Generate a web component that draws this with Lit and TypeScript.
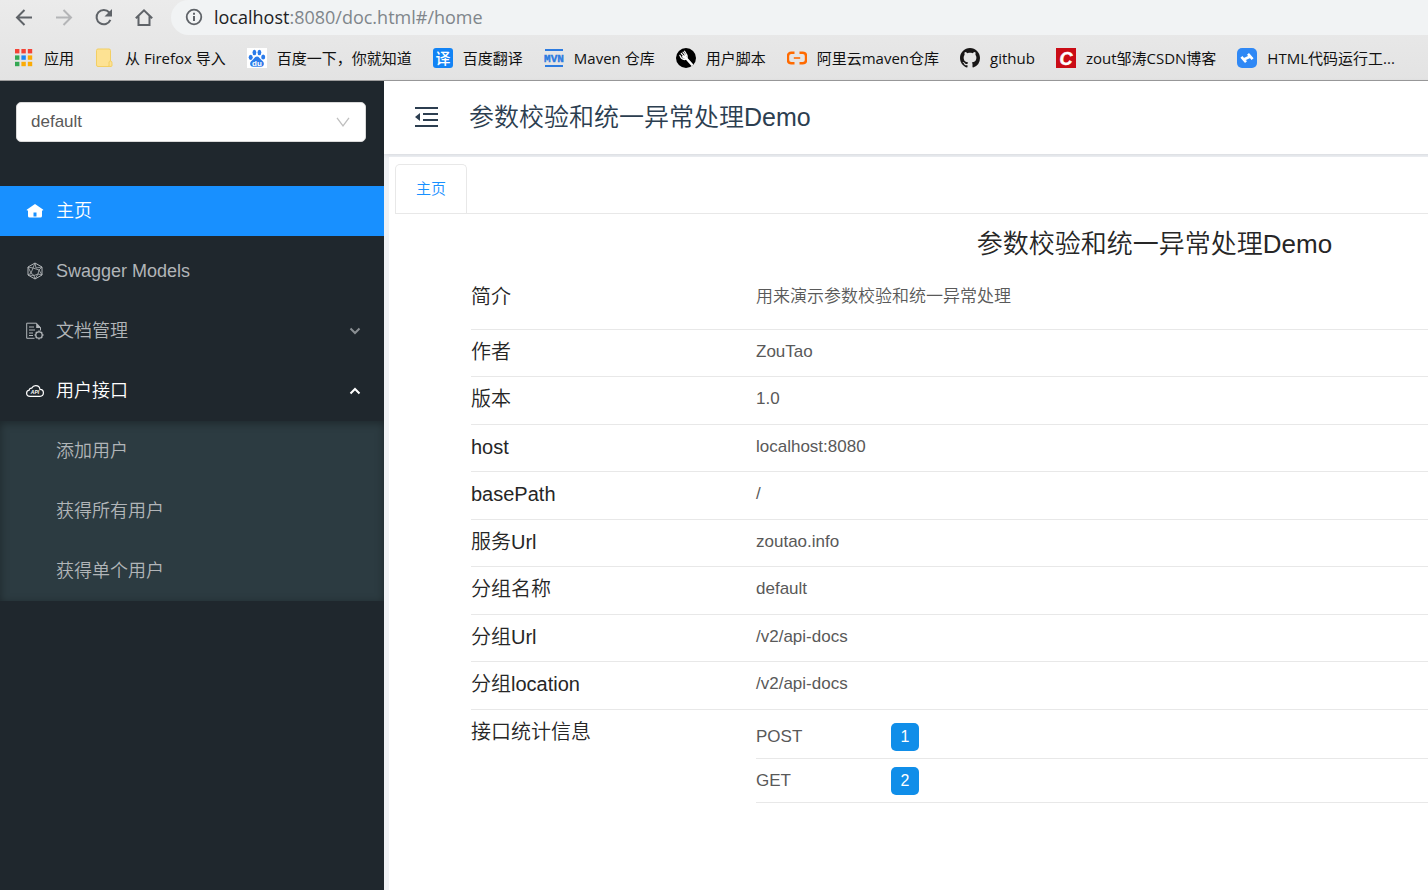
import { LitElement, html, css, svg, TemplateResult } from "lit";
import { customElement, state } from "lit/decorators.js";

const icon = (w: number, h: number, body: TemplateResult) =>
  html`<svg width=${w} height=${h} viewBox="0 0 ${w} ${h}" fill="none" aria-hidden="true">${body}</svg>`;

const backIcon = icon(20, 20, svg`<path d="M18 9.500H3M10.500 2L3 9.500l7.500 7.500" stroke="#5f6368" stroke-width="2"/>`);
const forwardIcon = icon(20, 20, svg`<path d="M2 9.500h15M9.500 2L17 9.500 9.500 17" stroke="#b4b5b7" stroke-width="2"/>`);
const reloadIcon = icon(20, 20, svg`<path d="M16.400 11.900A7.200 7.200 0 1 1 15.300 4.500" stroke="#5f6368" stroke-width="2"/><path d="M18 1v7.500h-7.500z" fill="#5f6368"/>`);
const browserHomeIcon = icon(20, 20, svg`<path d="M1.800 10.300L10 2.300l8.200 8M4.500 8.300V17h11V8.300" stroke="#5f6368" stroke-width="2"/>`);
const infoIcon = icon(18, 18, svg`<circle cx="9" cy="9" r="7.300" stroke="#5f6368" stroke-width="1.800"/><path d="M9 8v5M9 4.800v2" stroke="#5f6368" stroke-width="2"/>`);

const appColors = ["#f44336", "#f44336", "#f44336", "#34a853", "#1e88f5", "#fbab05", "#34a853", "#fbab05", "#fbab05"];
const appsIcon = icon(20, 20, svg`${appColors.map(
  (c, i) => svg`<rect x=${1 + (i % 3) * 6.4} y=${1 + Math.floor(i / 3) * 6.4} width="4.400" height="4.400" fill=${c}/>`
)}`);
const folderIcon = icon(20, 20, svg`<path d="M1.500 2.500a1.500 1.500 0 0 1 1.500-1.500h11a1.500 1.500 0 0 1 1.500 1.500V13h.500v5.500H3A1.500 1.500 0 0 1 1.500 17z" fill="#fde293" stroke="#f3cf63"/><path d="M13 18.500c1.500 0 1-2 1-3.500s.500-2 1.500-2 1.500 1 1.500 2.500v2c0 1-1 1-4 1z" fill="#fde293" stroke="#f3cf63"/>`);
const baiduIcon = icon(20, 20, svg`<path fill="#fff" d="M0 0h20v20H0z"/><g fill="#2b7bea"><ellipse cx="3.700" cy="9.300" rx="2" ry="2.600"/><ellipse cx="7.400" cy="4.500" rx="1.900" ry="2.700"/><ellipse cx="12.400" cy="4.500" rx="1.900" ry="2.700"/><ellipse cx="16.200" cy="9" rx="2" ry="2.500"/><path d="M10 8.500c2 0 2.800 2 4.200 3.300 1.600 1.400 3 2.600 2.600 4.600-.500 2.400-2.800 2.600-6.800 2.400-4 .200-6.300 0-6.800-2.400-.400-2 1-3.200 2.600-4.600C7.200 10.500 8 8.500 10 8.500z"/></g><text x="10" y="17.500" text-anchor="middle" font-family="Liberation Sans" font-weight="700" font-size="8" fill="#fff">du</text>`);
const translateIcon = icon(20, 20, svg`<rect width="20" height="20" rx="3" fill="#1283f5"/><text x="10" y="15.500" text-anchor="middle" font-family="Noto Sans CJK SC" font-weight="500" font-size="15" fill="#fff">译</text>`);
const mvnIcon = icon(20, 20, svg`<path fill="#2c7be0" d="M1 1h18v2H1zM1 17h18v2H1z"/><text x="10" y="14" text-anchor="middle" font-family="Liberation Mono" font-weight="700" font-size="11" stroke="#2c7be0" stroke-width=".400" fill="#2c7be0">MVN</text>`);
const scriptIcon = icon(20, 20, svg`<circle cx="10" cy="10" r="10" fill="#000"/><path d="M9.500 9.500l6.300 7" stroke="#fff" stroke-width="2.600" stroke-linecap="round"/><path d="M3.800 7.300c1 2.500 2.800 4.500 5.200 4.200 2-.500 2.600-2 2-4.200L8.600 3.200M5.300 5.300l3.400 4M7 4.200l3 3.700" stroke="#fff" stroke-width="1.200" stroke-linecap="round"/><path d="M5.500 8.500l4.500-1.800.800 3.500-3 .800z" fill="#fff"/>`);
const aliyunIcon = icon(20, 20, svg`<path d="M7.500 4.800H4.300C2.300 4.800 1 6 1 8v4c0 2 1.300 3.200 3.300 3.200h3.200M12.500 4.800h3.200C17.700 4.800 19 6 19 8v4c0 2-1.300 3.200-3.300 3.200h-3.200" stroke="#ff6a00" stroke-width="2.400"/><path d="M6.800 9.200h6.400v1.600H6.800z" fill="#ff6a00"/>`);
const githubIcon = html`<svg width="20" height="20" viewBox="0 0 16 16" aria-hidden="true"><path fill="#191717" d="M8 0C3.580 0 0 3.580 0 8c0 3.540 2.290 6.530 5.470 7.590.400.070.550-.170.550-.380 0-.190-.010-.820-.010-1.490-2.010.370-2.530-.490-2.690-.940-.090-.230-.480-.940-.820-1.130-.280-.150-.680-.520-.010-.530.630-.010 1.080.580 1.230.820.720 1.210 1.870.870 2.330.660.070-.520.280-.870.510-1.070-1.780-.200-3.640-.890-3.640-3.950 0-.870.310-1.590.820-2.150-.080-.200-.360-1.020.080-2.120 0 0 .670-.210 2.200.820.640-.180 1.320-.270 2-.270s1.360.090 2 .270c1.530-1.040 2.200-.820 2.200-.820.440 1.100.160 1.920.080 2.120.510.560.820 1.270.820 2.150 0 3.070-1.870 3.750-3.650 3.950.290.250.540.730.540 1.480 0 1.070-.010 1.930-.010 2.200 0 .210.150.460.550.380A8.010 8.010 0 0 0 16 8c0-4.420-3.580-8-8-8z"/></svg>`;
const csdnIcon = icon(20, 20, svg`<path fill="#ca0c16" d="M0 0h20v20H0z"/><text x="10" y="16.500" text-anchor="middle" font-family="Liberation Sans" font-style="italic" font-weight="700" font-size="18" stroke="#fff" stroke-width=".500" fill="#fff">C</text>`);
const htmlIcon = icon(20, 20, svg`<rect width="20" height="20" rx="5" fill="#2f88f5"/><path d="M4.400 8.800l4.600 5.400M11 5.800l4.600 5.400M6.800 11.500l6.400-3" stroke="#fff" stroke-width="2.600"/>`);

const homeIcon = icon(18, 18, svg`<path d="M9 2l8 5.600c.500.400.200 1-.300 1H16V14a1.600 1.600 0 0 1-1.600 1.600H3.600A1.600 1.600 0 0 1 2 14V8.600h-.700c-.500 0-.800-.600-.300-1z" fill="currentColor"/><path d="M7.500 10.500h3v4h-3z" fill="#1890ff"/>`);
const modelsIcon = icon(18, 18, svg`<g stroke="currentColor"><path d="M9 1l7 4v8l-7 4-7-4V5z"/><path d="M9 1L7 6 2 5l3 6-3 2 6 .500 1 3.500 3-5 4 1-3-5 3-3-6 1zM7 6l6 2-1 4-4 1.500L5 11z" stroke-width=".800"/></g>`);
const docIcon = icon(18, 18, svg`<g stroke="currentColor"><path d="M8.500 16.300H.700V1.200h9.800l4 4.300v3"/><path d="M3 5h5M3 8h6M3 11h4M3 13.500h4"/><circle cx="13" cy="13" r="3.200" stroke-width="1.300"/><path d="M13 8.600v1.200M13 16.200v1.300M8.600 13h1.200M16.200 13h1.300M9.900 9.900l.800.800M15.300 15.300l.800.800M16.100 9.900l-.800.800M10.700 15.300l-.800.800" stroke-width="1.400"/></g><path d="M10.200 1v5h4.800z" fill="currentColor"/>`);
const apiIcon = icon(18, 18, svg`<path d="M4.200 14.300C2 14.300.600 13 .600 11.200c0-1.600 1-2.700 2.600-3 .200-1.500 1.300-2.300 2.600-2.100C6.600 4.400 8 3.600 9.700 3.600c2.300 0 4 1.500 4.300 3.800 2 .100 3.400 1.600 3.400 3.400 0 2-1.400 3.500-3.400 3.500z" stroke="currentColor" stroke-width="1.200"/><text x="9" y="12" text-anchor="middle" font-family="Liberation Sans" font-style="italic" font-weight="700" font-size="5" fill="currentColor">API</text>`);
const chevronIcon = html`<svg class="chevron" width="12" height="8" viewBox="0 0 12 8" fill="none" aria-hidden="true"><path d="M1.500 1.500L6 6l4.500-4.500" stroke="currentColor" stroke-width="2"/></svg>`;
const selectArrow = icon(14, 10, svg`<path d="M1 .800l6 8 6-8" stroke="#bfbfbf" stroke-width="1.300"/>`);
const foldIcon = icon(24, 22, svg`<path d="M0 1h23v2H0zM8 7h15v2H8zM8 13h15v2H8zM0 19h23v2H0zM5 7v8L0 11z" fill="#2c3e50"/>`);

const bookmarks: [TemplateResult, string][] = [
  [appsIcon, "应用"],
  [folderIcon, "从 Firefox 导入"],
  [baiduIcon, "百度一下，你就知道"],
  [translateIcon, "百度翻译"],
  [mvnIcon, "Maven 仓库"],
  [scriptIcon, "用户脚本"],
  [aliyunIcon, "阿里云maven仓库"],
  [githubIcon, "github"],
  [csdnIcon, "zout邹涛CSDN博客"],
  [htmlIcon, "HTML代码运行工..."],
];

const info: [string, string][] = [
  ["简介", "用来演示参数校验和统一异常处理"],
  ["作者", "ZouTao"],
  ["版本", "1.0"],
  ["host", "localhost:8080"],
  ["basePath", "/"],
  ["服务Url", "zoutao.info"],
  ["分组名称", "default"],
  ["分组Url", "/v2/api-docs"],
  ["分组location", "/v2/api-docs"],
];

const title = "参数校验和统一异常处理Demo";

@customElement("browser-bar")
class BrowserBar extends LitElement {
  static styles = css`
    :host {
      display: block;
      overflow: hidden;
      background: linear-gradient(#ebebeb, #e3e3e3);
      border-bottom: 1px solid #9c9c9c;
      font: 15px/20px "Open Sans", "Noto Sans CJK SC", sans-serif;
      color: #111;
    }
    svg { display: block; flex: none; }
    .nav { display: flex; align-items: center; height: 35px; padding-left: 14px; gap: 20px; }
    button { display: block; border: 0; padding: 0; background: none; }
    .address {
      flex: 1;
      box-sizing: border-box;
      display: flex;
      align-items: center;
      gap: 11px;
      height: 35px;
      margin-left: -3px;
      padding: 0 0 1px 14px;
      border-radius: 18px 0 0 18px;
      background: #f1f3f4;
      font-size: 18px;
      line-height: 24px;
      color: #80868b;
    }
    .host { color: #202124; }
    .marks { display: flex; align-items: center; height: 45px; padding-left: 14px; gap: 21px; white-space: nowrap; }
    a { display: flex; align-items: center; gap: 10px; color: inherit; text-decoration: none; }
  `;
  render() {
    return html`
      <div class="nav">
        <button aria-label="后退">${backIcon}</button>
        <button aria-label="前进">${forwardIcon}</button>
        <button aria-label="刷新">${reloadIcon}</button>
        <button aria-label="主页">${browserHomeIcon}</button>
        <div class="address">${infoIcon}<span><span class="host">localhost</span>:8080/doc.html#/home</span></div>
      </div>
      <nav class="marks">${bookmarks.map(([i, t]) => html`<a href="#">${i}<span>${t}</span></a>`)}</nav>
    `;
  }
}

@customElement("side-menu")
class SideMenu extends LitElement {
  @state() private open = true;
  static styles = css`
    :host {
      display: block;
      flex: none;
      box-sizing: border-box;
      width: 384px;
      padding-top: 21px;
      background: #1f272d;
      color: #b1b5b8;
      font-size: 18px;
      line-height: 26px;
    }
    svg { display: block; flex: none; }
    .picker { display: grid; align-items: center; margin: 0 18px 44px 16px; }
    .picker > * { grid-area: 1 / 1; }
    .picker svg { justify-self: end; margin-right: 16px; pointer-events: none; }
    select {
      appearance: none;
      width: 100%;
      height: 40px;
      padding: 0 40px 0 14px;
      border: 1px solid #d9d9d9;
      border-radius: 5px;
      background: #fff;
      color: #595959;
      font: inherit;
      font-size: 17px;
    }
    ul { list-style: none; margin: 0; padding: 0; display: flex; flex-direction: column; gap: 10px; }
    a, button {
      box-sizing: border-box;
      display: flex;
      align-items: center;
      gap: 12px;
      width: 100%;
      height: 50px;
      padding: 0 23px 0 26px;
      border: 0;
      background: none;
      color: inherit;
      font: inherit;
      text-decoration: none;
      text-align: left;
    }
    .active { background: #1890ff; color: #fff; }
    .chevron { margin-left: auto; color: #8a8f93; }
    .open, .open .chevron { color: #fff; }
    .open .chevron { transform: rotate(180deg); }
    .sub { margin-top: 5px; padding: 5px 0; background: #2c3b41; box-shadow: inset 0 2px 8px rgba(0, 0, 0, 0.35); }
    .sub a { padding-left: 56px; }
  `;
  render() {
    return html`
      <div class="picker">
        <select aria-label="分组"><option>default</option></select>
        ${selectArrow}
      </div>
      <ul>
        <li><a class="active" href="#">${homeIcon}主页</a></li>
        <li><a href="#">${modelsIcon}Swagger Models</a></li>
        <li><button>${docIcon}文档管理${chevronIcon}</button></li>
        <li>
          <button class=${this.open ? "open" : ""} aria-expanded=${this.open} @click=${() => (this.open = !this.open)}>
            ${apiIcon}用户接口${chevronIcon}
          </button>
          ${this.open
            ? html`<ul class="sub">
                ${["添加用户", "获得所有用户", "获得单个用户"].map((t) => html`<li><a href="#">${t}</a></li>`)}
              </ul>`
            : ""}
        </li>
      </ul>
    `;
  }
}

@customElement("app-root")
class AppRoot extends LitElement {
  static styles = css`
    :host {
      display: flex;
      flex-direction: column;
      min-height: 100vh;
      overflow: hidden;
      font-family: "Liberation Sans", "Noto Sans CJK SC", sans-serif;
      font-weight: 350;
    }
    svg { display: block; }
    .layout { flex: 1; display: flex; min-width: 1920px; background: #f0f2f5; }
    main { flex: 1; display: flex; flex-direction: column; }
    header {
      box-sizing: border-box;
      display: flex;
      align-items: center;
      gap: 30px;
      height: 73px;
      padding: 0 0 2px 31px;
      background: #fff;
      box-shadow: 0 1px 4px rgba(0, 21, 41, 0.12);
      color: #2c3e50;
      font-size: 25px;
      line-height: 36px;
    }
    .fold { border: 0; padding: 0; background: none; }
    .page { flex: 1; margin: 3px 0 0 5px; padding-top: 7px; background: #fff; }
    .tabs { display: flex; margin-left: 6px; border-bottom: 1px solid #e8e8e8; }
    .tab {
      height: 49px;
      padding: 0 20px 4px;
      border: 1px solid #e8e8e8;
      border-bottom: 0;
      border-radius: 5px 5px 0 0;
      background: #fff;
      color: #1890ff;
      font: inherit;
      font-size: 15px;
    }
    h1 { margin: 0; padding: 12px 0 13px; text-align: center; font-size: 26px; font-weight: inherit; line-height: 36px; color: #262626; }
    table { border-collapse: collapse; table-layout: fixed; width: 100%; }
    .info { width: auto; min-width: 100%; }
    .box { margin-left: 82px; }
    th, td { padding: 0; text-align: left; vertical-align: top; font-weight: inherit; }
    .info > tbody > tr > th { width: 285px; padding-top: 7px; font-size: 20px; line-height: 30px; color: #262626; }
    .info > tbody > tr > td { padding-top: 8px; font-size: 17px; line-height: 28px; color: #595959; }
    .info > tbody > tr > td.nested { padding-top: 5px; }
    .row { height: 48px; border-bottom: 1px solid #e8e8e8; }
    .row:nth-child(even) { height: 47px; }
    .row:first-child { height: 54px; }
    .stats th { width: 135px; }
    .stats td, .stats th { height: 42px; padding-top: 1px; vertical-align: middle; border-bottom: 1px solid #e8e8e8; }
    .badge {
      display: block;
      width: 28px;
      border-radius: 5px;
      background: #108ee9;
      color: #fff;
      font-size: 16px;
      line-height: 28px;
      text-align: center;
    }
  `;
  render() {
    return html`
      <browser-bar></browser-bar>
      <div class="layout">
        <side-menu></side-menu>
        <main>
          <header><button class="fold" aria-label="收起菜单">${foldIcon}</button><span>${title}</span></header>
          <section class="page">
            <div class="tabs" role="tablist"><button class="tab" role="tab" aria-selected="true">主页</button></div>
            <h1>${title}</h1>
            <div class="box">
              <table class="info">
                <tbody>
                  ${info.map(([k, v]) => html`<tr class="row"><th scope="row">${k}</th><td>${v}</td></tr>`)}
                  <tr>
                    <th scope="row">接口统计信息</th>
                    <td class="nested">
                      <table class="stats">
                        <tbody>
                          <tr><th scope="row">POST</th><td><span class="badge">1</span></td></tr>
                          <tr><th scope="row">GET</th><td><span class="badge">2</span></td></tr>
                        </tbody>
                      </table>
                    </td>
                  </tr>
                </tbody>
              </table>
            </div>
          </section>
        </main>
      </div>
    `;
  }
}
